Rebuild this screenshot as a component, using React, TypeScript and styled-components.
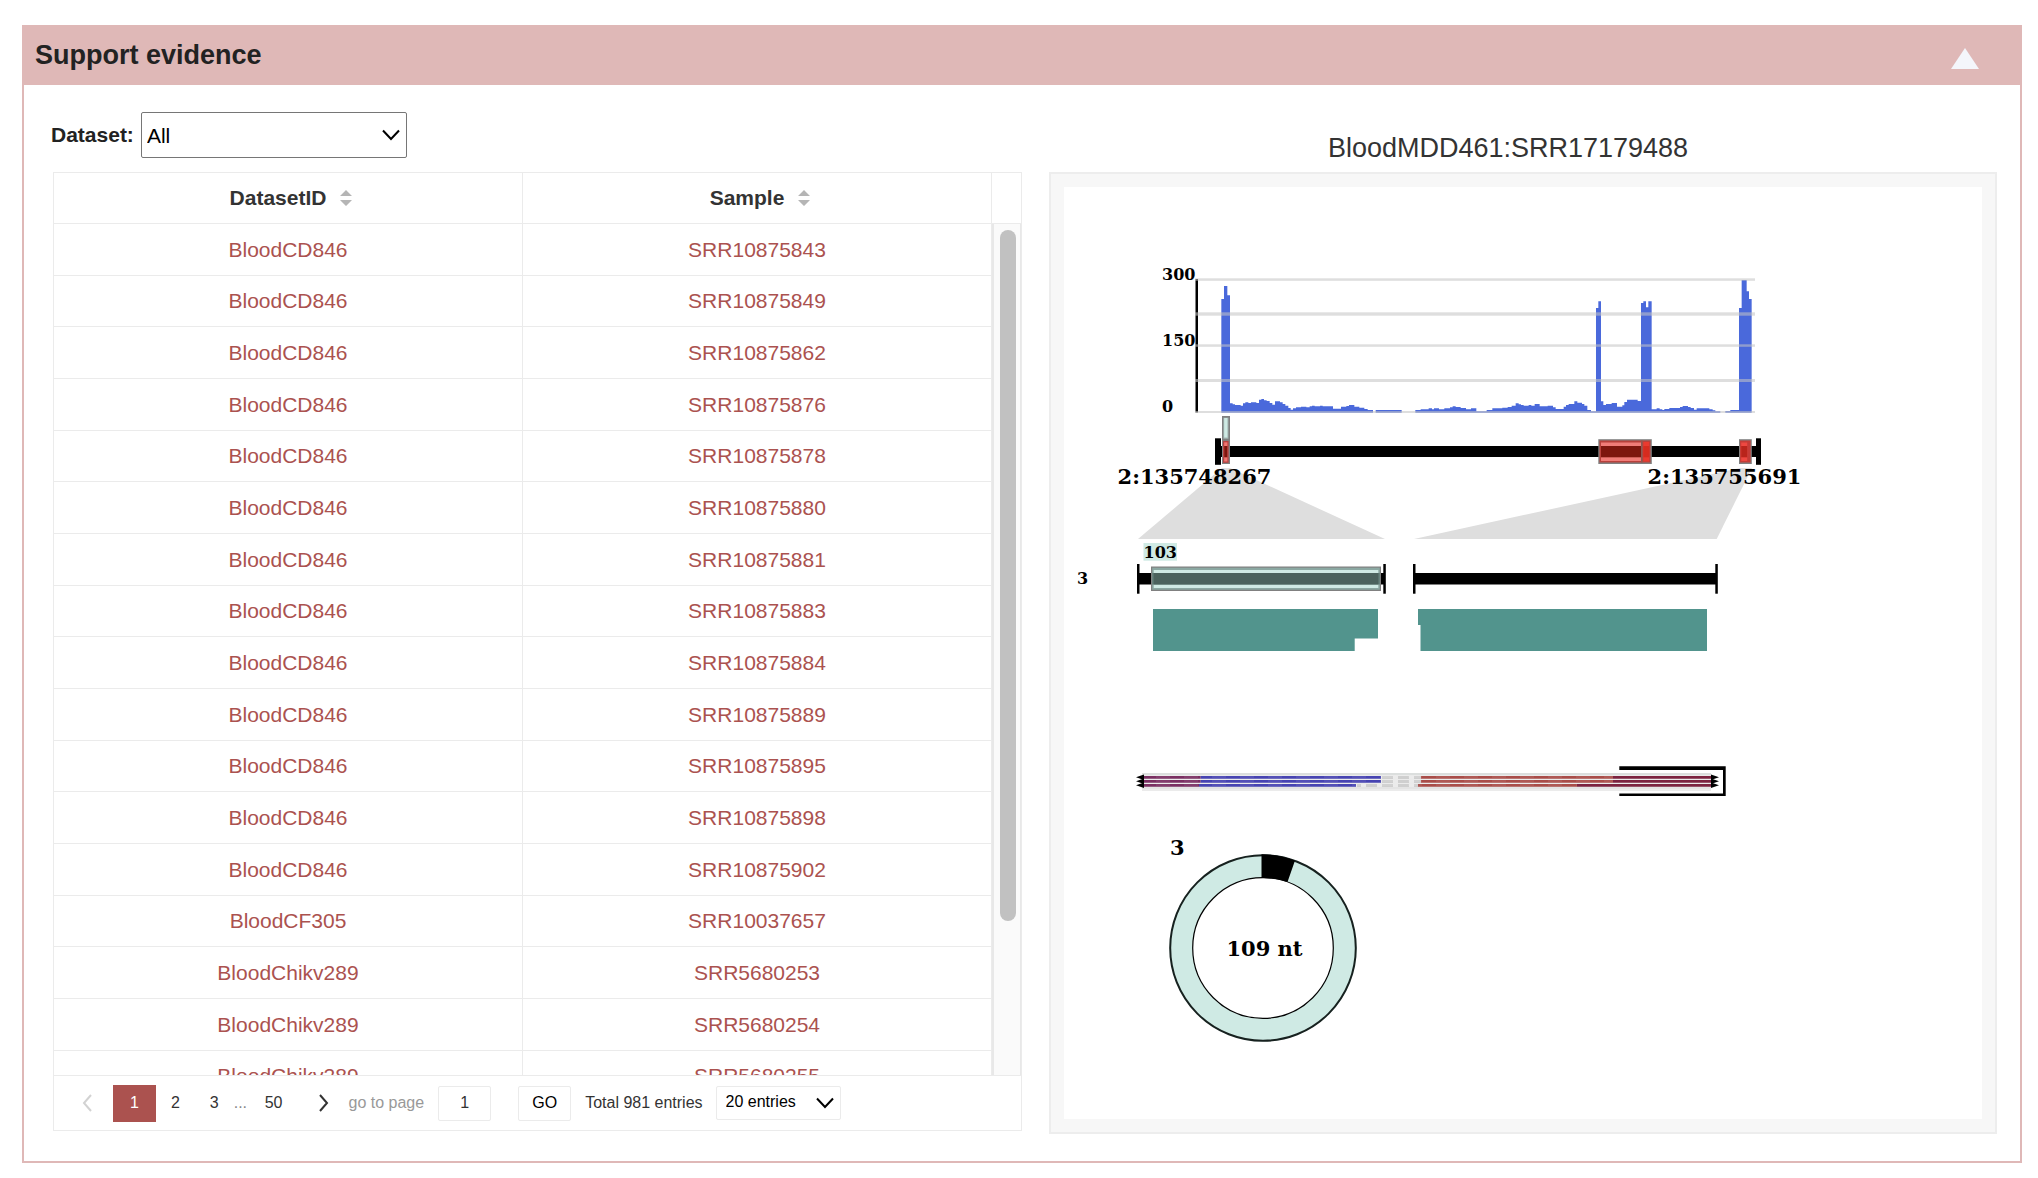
import React from 'react';
import styled, { createGlobalStyle } from 'styled-components';

const GlobalStyle = createGlobalStyle`
  *, *::before, *::after { box-sizing: border-box; }
  body {
    margin: 0;
    background: #fff;
    color: #333;
    font-family: "Liberation Sans", Arial, Helvetica, sans-serif;
    font-size: 21px;
  }
  button, input, select { font: inherit; color: inherit; }
  button { cursor: pointer; }
`;

const line = '#ebebeb';
const rose = '#dfb8b7';
const brick = '#ab524f';

const Page = styled.main`
  padding: 25px 16px 15px 22px;
`;

const Panel = styled.section`
  border: 2px solid ${rose};
`;

const PanelHeader = styled.header`
  display: flex;
  align-items: center;
  justify-content: space-between;
  height: 58px;
  padding: 0 41px 2px 11px;
  background: ${rose};
`;

const PanelTitle = styled.h2`
  margin: 0;
  font-size: 27px;
  line-height: 30px;
  color: #222;
`;

const CollapseButton = styled.button`
  display: flex;
  padding: 6px 0 0;
  border: 0;
  background: none;
`;

const PanelBody = styled.div`
  display: grid;
  grid-template-columns: minmax(0, 971fr) minmax(0, 948fr);
  column-gap: 27px;
  align-items: start;
  padding: 27px 23px 27px 27px;
`;

const FilterRow = styled.div`
  display: flex;
  align-items: center;
  gap: 7px;
  height: 46px;
  margin-bottom: 14px;
`;

const FilterLabel = styled.label`
  font-weight: 700;
  color: #222;
`;

const SelectBox = styled.div<{ $width: number }>`
  display: grid;
  align-items: center;
  width: ${(p) => p.$width}px;
  > * { grid-area: 1 / 1; }
  > svg {
    justify-self: end;
    margin-right: 7px;
    pointer-events: none;
  }
`;

const FilterSelect = styled.select`
  width: 100%;
  height: 46px;
  padding: 0 5px;
  border: 1px solid #767676;
  border-radius: 2px;
  background: #fff;
  color: #000;
  appearance: none;
`;

const TableFrame = styled.div`
  margin-left: 2px;
  border: 1px solid ${line};
`;

const TableArea = styled.div`
  display: flex;
  height: 902px;
  overflow: hidden;
`;

const DataTable = styled.table`
  width: 100%;
  align-self: flex-start;
  table-layout: fixed;
  border-spacing: 0;
  text-align: center;
`;

const HeadCell = styled.th`
  height: 51px;
  padding: 0;
  border: solid ${line};
  border-width: 0 1px 1px 0;
`;

const SortButton = styled.button`
  display: inline-flex;
  align-items: center;
  gap: 14px;
  padding: 0 0 0 6px;
  border: 0;
  background: none;
  font-weight: 700;
  color: #333;
`;

const Row = styled.tr`
  height: 52px;
  &:nth-child(3n + 2) { height: 51px; }
`;

const Cell = styled.td`
  padding: 0;
  border: solid ${line};
  border-width: 0 1px 1px 0;
`;

const CellLink = styled.a`
  color: ${brick};
  text-decoration: none;
`;

const Gutter = styled.div`
  display: flex;
  flex: none;
  flex-direction: column;
  width: 29px;
`;

const GutterHead = styled.div`
  height: 51px;
  border-bottom: 1px solid ${line};
`;

const Track = styled.div`
  flex: 1;
  padding: 6px 4px 0 6px;
  border: solid #e8e8e8;
  border-width: 0 1px 0 2px;
  background: #fafafa;
`;

const Thumb = styled.div`
  height: 691px;
  border-radius: 8px;
  background: #c1c1c1;
`;

const Pager = styled.nav`
  display: flex;
  align-items: center;
  height: 55px;
  padding-left: 8px;
  border-top: 1px solid ${line};
  font-size: 16px;
`;

const PageButton = styled.button<{ $current?: boolean }>`
  height: 37px;
  padding: 0 ${(p) => (p.$current ? 17 : 15)}px;
  border: 0;
  background: ${(p) => (p.$current ? brick : 'none')};
  color: ${(p) => (p.$current ? '#fff' : '#333')};
`;

const ArrowButton = styled.button`
  display: flex;
  align-items: center;
  justify-content: center;
  width: 51px;
  height: 37px;
  padding: 0;
  border: 0;
  background: none;
`;

const Dots = styled.span`
  width: 16px;
  color: #888;
`;

const JumpLabel = styled.label`
  margin-right: 14px;
  color: #999;
`;

const JumpInput = styled.input`
  width: 53px;
  height: 35px;
  margin-right: 27px;
  padding: 0;
  border: 1px solid ${line};
  border-radius: 2px;
  text-align: center;
`;

const GoButton = styled.button`
  width: 53px;
  height: 35px;
  padding: 0;
  border: 1px solid ${line};
  border-radius: 2px;
  background: #fff;
  color: #000;
`;

const Total = styled.span`
  margin: 0 13px 0 14px;
`;

const SizeSelect = styled.select`
  width: 100%;
  height: 34px;
  padding: 0 9px 3px;
  border: 1px solid ${line};
  border-radius: 2px;
  background: #fff;
  color: #000;
  appearance: none;
`;

const FigureTitle = styled.h3`
  display: flex;
  align-items: flex-end;
  justify-content: center;
  height: 60px;
  margin: 0;
  padding: 0 30px 9px 0;
  font-size: 27px;
  font-weight: 400;
  line-height: 30px;
`;

const FigureFrame = styled.div`
  padding: 13px;
  border: 2px solid #ededed;
  background: #f7f7f7;
`;

const Drawing = styled.svg`
  display: block;
  width: 100%;
  background: #fff;
  font-family: "DejaVu Serif", serif;
  font-weight: 700;
`;

const rows: [string, string][] = [
  ['BloodCD846', 'SRR10875843'],
  ['BloodCD846', 'SRR10875849'],
  ['BloodCD846', 'SRR10875862'],
  ['BloodCD846', 'SRR10875876'],
  ['BloodCD846', 'SRR10875878'],
  ['BloodCD846', 'SRR10875880'],
  ['BloodCD846', 'SRR10875881'],
  ['BloodCD846', 'SRR10875883'],
  ['BloodCD846', 'SRR10875884'],
  ['BloodCD846', 'SRR10875889'],
  ['BloodCD846', 'SRR10875895'],
  ['BloodCD846', 'SRR10875898'],
  ['BloodCD846', 'SRR10875902'],
  ['BloodCF305', 'SRR10037657'],
  ['BloodChikv289', 'SRR5680253'],
  ['BloodChikv289', 'SRR5680254'],
  ['BloodChikv289', 'SRR5680255'],
];

/* Read coverage: [bin start, top], drawn as a step outline at a third of these units. */
const coverage: [number, number][] = [
  [94, 117], [102, 78], [112, 106], [120, 430], [128, 433], [135, 435], [152, 437], [159, 430],
  [166, 427], [175, 429], [183, 427], [199, 429], [207, 419], [214, 417], [222, 421], [230, 423],
  [239, 429], [247, 434], [255, 424], [270, 427], [278, 432], [286, 437], [295, 444], [302, 449],
  [309, 445], [318, 442], [333, 440], [349, 442], [359, 439], [366, 437], [374, 439], [390, 437],
  [398, 439], [429, 446], [453, 440], [469, 438], [477, 435], [493, 440], [508, 443], [523, 447],
  [533, 450], [549, 458], [557, 450], [635, 458], [676, 450], [692, 448], [716, 445], [726, 448],
  [732, 445], [747, 448], [763, 445], [780, 442], [788, 439], [797, 441], [812, 444], [828, 448],
  [843, 445], [859, 454], [890, 450], [907, 445], [937, 443], [953, 441], [965, 437], [977, 430],
  [986, 433], [993, 435], [1001, 437], [1016, 435], [1024, 437], [1034, 432], [1049, 439],
  [1073, 437], [1089, 442], [1097, 447], [1121, 440], [1128, 435], [1136, 432], [1153, 424],
  [1162, 428], [1176, 432], [1183, 437], [1192, 450], [1203, 454], [1218, 144], [1225, 124],
  [1233, 424], [1240, 435], [1248, 432], [1265, 429], [1281, 440], [1297, 436], [1303, 426],
  [1311, 419], [1343, 423], [1353, 129], [1360, 124], [1368, 142], [1375, 124], [1385, 448],
  [1400, 445], [1409, 448], [1417, 450], [1423, 447], [1438, 444], [1470, 441], [1478, 438],
  [1494, 441], [1502, 444], [1512, 449], [1520, 445], [1558, 448], [1568, 451], [1576, 454],
  [1591, 458], [1606, 453], [1621, 450], [1647, 144], [1655, 60], [1670, 94], [1677, 117],
  [1685, 458],
];

const coveragePath =
  'M94 458' + coverage.map(([x, top]) => `H${x}V${top}`).join('') + 'Z';

function Chevron({ direction, color }: { direction: 'left' | 'right' | 'down'; color: string }) {
  if (direction === 'down') {
    return (
      <svg width="18" height="12" viewBox="0 0 18 12" aria-hidden="true">
        <path d="M1 1.5 9 10 17 1.5" fill="none" stroke={color} strokeWidth="2" />
      </svg>
    );
  }
  const d = direction === 'left' ? 'M9 1 2 9l7 8' : 'M2 1l7 8-7 8';
  return (
    <svg width="11" height="18" viewBox="0 0 11 18" aria-hidden="true">
      <path d={d} fill="none" stroke={color} strokeWidth="2" />
    </svg>
  );
}

function SortIcon() {
  return (
    <svg width="12" height="16" viewBox="0 0 12 16" aria-hidden="true">
      <path d="M6 0l6 6H0zM6 16l6-6H0z" fill="#b5b5b5" />
    </svg>
  );
}

function CoverageChart() {
  return (
    <g>
      <rect x="1195.5" y="279" width="2.5" height="133.5" />
      <g transform="translate(1190 260) scale(0.33333)">
        <path d={coveragePath} fill="#4a69db" />
      </g>
      <g fill="#c4c4c4" fillOpacity="0.56">
        <rect x="1195" y="278.3" width="560" height="2.5" />
        <rect x="1195" y="312.3" width="560" height="3.4" />
        <rect x="1195" y="344.3" width="560" height="2.5" />
        <rect x="1195" y="379" width="560" height="3" />
        <rect x="1195" y="411" width="560" height="2" />
      </g>
      <g fontSize="16">
        <text x="1162" y="279.5">300</text>
        <text x="1162" y="345.500">150</text>
        <text x="1162" y="411.500">0</text>
      </g>
    </g>
  );
}

function GeneTrack() {
  return (
    <g>
      <rect x="1215" y="446" width="546" height="11" />
      <rect x="1215" y="438.3" width="6" height="26.5" />
      <rect x="1756" y="438.3" width="5" height="26.5" />

      <rect x="1222" y="416" width="8" height="25" fill="#808080" />
      <rect x="1223.4" y="417.7" width="5" height="21" fill="#a5bab6" />
      <rect x="1224.2" y="418" width="3.2" height="19.5" fill="#cfeae4" />
      <rect x="1222" y="440" width="8" height="24" fill="#808080" />
      <rect x="1223" y="441" width="5.6" height="21.8" fill="#b8403f" />
      <rect x="1224.2" y="442.3" width="3.2" height="19.2" fill="#f07772" />
      <rect x="1224.2" y="446" width="3.2" height="11.3" fill="#7e160e" />

      <rect x="1598.3" y="439.2" width="53.5" height="24.8" fill="#808080" />
      <rect x="1599.5" y="440.5" width="51" height="22" fill="#b8403b" />
      <rect x="1601" y="442.5" width="41" height="18.5" fill="#f07c78" />
      <rect x="1601" y="446" width="41" height="11.3" fill="#7e160e" />
      <rect x="1641" y="440.5" width="1.5" height="22" fill="#8b5a52" />
      <rect x="1643.3" y="442" width="6" height="19.5" fill="#ea3a2f" />
      <rect x="1643.3" y="446" width="6" height="11.3" fill="#d62b1e" />

      <rect x="1739" y="439.2" width="12.8" height="24.8" fill="#808080" />
      <rect x="1740" y="440.5" width="10.6" height="22" fill="#c53c37" />
      <rect x="1741.2" y="442.5" width="6" height="18.5" fill="#ee4841" />
      <rect x="1741.2" y="446" width="6" height="11.3" fill="#b9241b" />
    </g>
  );
}

function Junctions() {
  return (
    <g>
      <g fill="#dedede">
        <path d="M1222 468h8L1385 539H1138z" />
        <path d="M1740 468h12L1716.700 539H1414z" />
      </g>
      <g fontSize="21" textAnchor="middle">
        <text x="1194.500" y="483.500">2:135748267</text>
        <text x="1724.500" y="483.500">2:135755691</text>
      </g>

      <rect x="1143.500" y="543" width="33.500" height="17.700" fill="#cfeae4" />
      <g fontSize="16">
        <text x="1143.500" y="557.500">103</text>
        <text x="1077" y="584">3</text>
      </g>

      <rect x="1138" y="573" width="247" height="11.5" />
      <rect x="1137" y="564" width="2.500" height="29.700" />
      <rect x="1383.300" y="564" width="2.500" height="29.700" />
      <rect x="1151" y="566.5" width="230" height="24.5" fill="#808080" />
      <rect x="1152.200" y="567.7" width="227.600" height="22" fill="#8ba8a2" />
      <rect x="1153.700" y="570" width="224.600" height="18" fill="#cfeae4" />
      <rect x="1152.200" y="573" width="227.600" height="11.5" fill="#5f7b75" />
      <rect x="1153.700" y="573" width="224.600" height="11.5" fill="#4b625d" />

      <rect x="1414" y="573" width="303" height="11.500" />
      <rect x="1413" y="564" width="2.500" height="29.700" />
      <rect x="1715.300" y="564" width="2.500" height="29.700" />

      <g fill="#52948d">
        <path d="M1153 609h225v29.500h-23.300V651H1153z" />
        <path d="M1418 609h289v42h-286.500V625H1418z" />
      </g>
    </g>
  );
}

const reads = [
  { y: 776, overlap: 1200.7, end: 1381, start: 1420.7, tail: 1613, dash: '11 5' },
  { y: 780, overlap: 1200.7, end: 1381, start: 1420.7, tail: 1613, dash: '11 5' },
  { y: 784, overlap: 1199, end: 1356, start: 1418, tail: 1577, dash: '4 5 11 5 11 5 11 5' },
];

function ReadTracks() {
  return (
    <g>
      <rect x="1142" y="773" width="569" height="18" fill="#ebebeb" />
      <rect x="1142" y="773" width="569" height="2" fill="#dcdfde" />
      <rect x="1142" y="787.500" width="569" height="1" fill="#dedede" />
      {reads.map((r) => {
        const parts: [number, number, string][] = [
          [1143, r.overlap, '#7a2f62'],
          [r.overlap, r.end, '#4744b2'],
          [r.start, r.tail, '#a94d49'],
          [r.tail, 1711, '#7c2340'],
        ];
        return (
          <g key={r.y}>
            {parts.map(([from, to, fill]) => (
              <g key={from} fill={fill}>
                <rect x={from} y={r.y} width={to - from} height="2" />
                <rect x={from} y={r.y + 2} width={to - from} height="1" fillOpacity="0.75" />
              </g>
            ))}
            <line x1={r.end + 1} x2={r.start} y1={r.y + 1.5} y2={r.y + 1.5} stroke="#cfcfcf" strokeWidth="3" strokeDasharray={r.dash} />
            <line x1="1156" x2={r.tail} y1={r.y + 1} y2={r.y + 1} stroke="#fff" strokeOpacity="0.07" strokeWidth="2" strokeDasharray="14 14" />
            <path d={`M1136 ${r.y + 1.3}l8-2.800v5.600zM1719 ${r.y + 1.3}l-8-2.800v5.600z`} />
          </g>
        );
      })}
      <path d="M1619.300 766.300h106.400V796h-106.400v-2.500H1723V770h-103.700z" />
    </g>
  );
}

function CircleMap() {
  return (
    <g>
      <circle cx="1263" cy="948" r="82" fill="none" stroke="#cfeae4" strokeWidth="23" />
      <circle cx="1263" cy="948" r="92.800" fill="none" stroke="#17211f" strokeWidth="2" />
      <circle cx="1263" cy="948" r="70.300" fill="none" stroke="#000" strokeWidth="1.200" />
      <path d="M1261.500 854.300A93.500 93.500 0 0 1 1295 860.500L1287.500 882A70 70 0 0 0 1261.500 878z" />
      <g fontSize="21">
        <text x="1170" y="855">3</text>
        <text x="1264.500" y="956">
          <tspan textAnchor="middle">109 nt</tspan>
        </text>
      </g>
    </g>
  );
}

export default function App() {
  return (
    <>
      <GlobalStyle />
      <Page>
        <Panel>
          <PanelHeader>
            <PanelTitle>Support evidence</PanelTitle>
            <CollapseButton type="button" aria-label="Collapse">
              <svg width="28" height="21" viewBox="0 0 28 21" aria-hidden="true">
                <path d="M14 0l14 21H0z" fill="#f4f6fb" />
              </svg>
            </CollapseButton>
          </PanelHeader>
          <PanelBody>
            <div>
              <FilterRow>
                <FilterLabel htmlFor="dataset">Dataset:</FilterLabel>
                <SelectBox $width={266}>
                  <FilterSelect id="dataset">
                    <option>All</option>
                  </FilterSelect>
                  <Chevron direction="down" color="#000" />
                </SelectBox>
              </FilterRow>
              <TableFrame>
                <TableArea>
                  <DataTable>
                    <thead>
                      <tr>
                        {['DatasetID', 'Sample'].map((name) => (
                          <HeadCell key={name} scope="col">
                            <SortButton type="button">
                              {name}
                              <SortIcon />
                            </SortButton>
                          </HeadCell>
                        ))}
                      </tr>
                    </thead>
                    <tbody>
                      {rows.map(([dataset, sample]) => (
                        <Row key={sample}>
                          <Cell><CellLink href="#dataset">{dataset}</CellLink></Cell>
                          <Cell><CellLink href="#sample">{sample}</CellLink></Cell>
                        </Row>
                      ))}
                    </tbody>
                  </DataTable>
                  <Gutter>
                    <GutterHead />
                    <Track><Thumb /></Track>
                  </Gutter>
                </TableArea>
                <Pager>
                  <ArrowButton type="button" aria-label="Previous page" disabled>
                    <Chevron direction="left" color="#d2d2d2" />
                  </ArrowButton>
                  <PageButton type="button" $current>1</PageButton>
                  <PageButton type="button">2</PageButton>
                  <PageButton type="button">3</PageButton>
                  <Dots>...</Dots>
                  <PageButton type="button">50</PageButton>
                  <ArrowButton type="button" aria-label="Next page">
                    <Chevron direction="right" color="#333" />
                  </ArrowButton>
                  <JumpLabel htmlFor="jump">go to page</JumpLabel>
                  <JumpInput id="jump" type="text" defaultValue="1" />
                  <GoButton type="button">GO</GoButton>
                  <Total>Total 981 entries</Total>
                  <SelectBox $width={125}>
                    <SizeSelect aria-label="Page size">
                      <option>20 entries</option>
                    </SizeSelect>
                    <Chevron direction="down" color="#000" />
                  </SelectBox>
                </Pager>
              </TableFrame>
            </div>
            <div>
              <FigureTitle>BloodMDD461:SRR17179488</FigureTitle>
              <FigureFrame>
                <Drawing viewBox="1064 187 918 932" role="img" aria-label="Coverage and junctions">
                  <CoverageChart />
                  <GeneTrack />
                  <Junctions />
                  <ReadTracks />
                  <CircleMap />
                </Drawing>
              </FigureFrame>
            </div>
          </PanelBody>
        </Panel>
      </Page>
    </>
  );
}
